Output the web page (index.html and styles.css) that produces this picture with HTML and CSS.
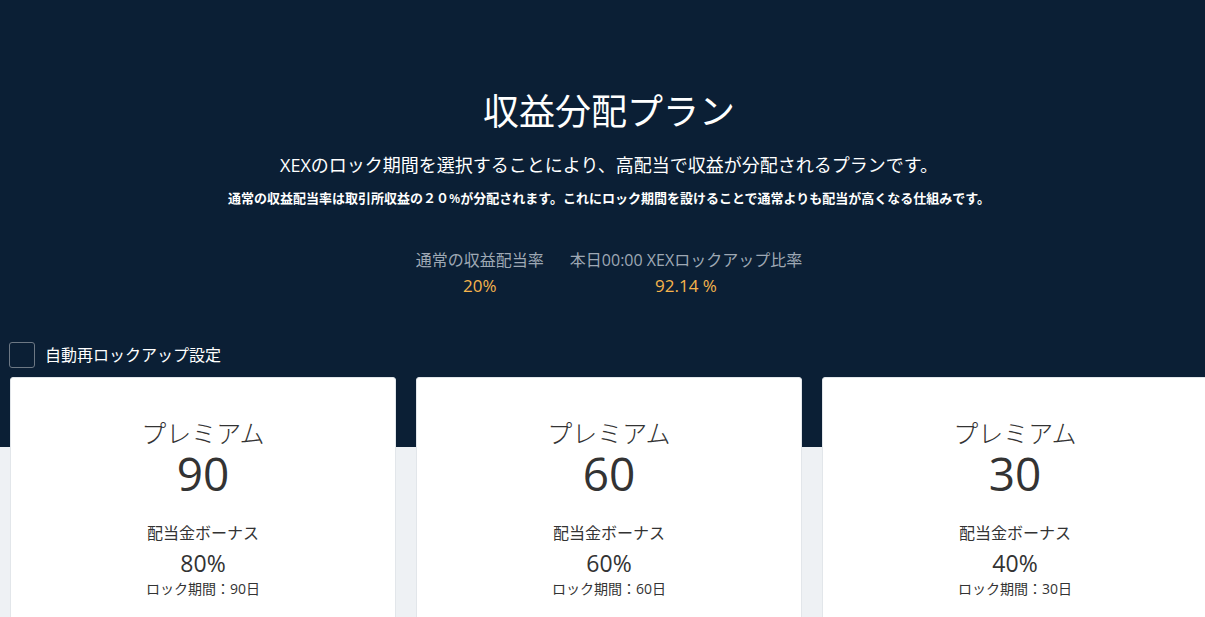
FILE: index.html
```html
<!DOCTYPE html>
<html lang="ja">
<head>
<meta charset="utf-8">
<title>収益分配プラン</title>
<link rel="stylesheet" href="styles.css">
</head>
<body>
<div class="page">
  <section class="hero">
    <h1 class="title">収益分配プラン</h1>
    <p class="lead">XEXのロック期間を選択することにより、高配当で収益が分配されるプランです。</p>
    <p class="note">通常の収益配当率は取引所収益の２０%が分配されます。これにロック期間を設けることで通常よりも配当が高くなる仕組みです。</p>
    <div class="stats">
      <div class="stat">
        <div class="stat-label">通常の収益配当率</div>
        <div class="stat-value">20%</div>
      </div>
      <div class="stat">
        <div class="stat-label">本日00:00 XEXロックアップ比率</div>
        <div class="stat-value">92.14 %</div>
      </div>
    </div>
    <label class="auto">
      <span class="box"></span>
      <span class="auto-text">自動再ロックアップ設定</span>
    </label>
  </section>
  <section class="plans">
    <div class="card">
      <div class="plan-name">プレミアム</div>
      <div class="plan-days">90</div>
      <div class="bonus-label">配当金ボーナス</div>
      <div class="bonus-value">80%</div>
      <div class="lock">ロック期間：90日</div>
    </div>
    <div class="card">
      <div class="plan-name">プレミアム</div>
      <div class="plan-days">60</div>
      <div class="bonus-label">配当金ボーナス</div>
      <div class="bonus-value">60%</div>
      <div class="lock">ロック期間：60日</div>
    </div>
    <div class="card">
      <div class="plan-name">プレミアム</div>
      <div class="plan-days">30</div>
      <div class="bonus-label">配当金ボーナス</div>
      <div class="bonus-value">40%</div>
      <div class="lock">ロック期間：30日</div>
    </div>
  </section>
</div>
</body>
</html>
```
FILE: styles.css
```css
html, body {
  margin: 0;
  padding: 0;
  overflow: hidden;
  background: #eef1f4;
}
body {
  font-family: "Open Sans", "Noto Sans CJK JP", sans-serif;
  color: #333;
}
.page {
  width: 1218px;
}
.hero {
  background: #0b1f35;
  color: #fff;
  padding: 90px 10px 9px;
  text-align: center;
}
.title {
  margin: 0;
  font-size: 36px;
  line-height: 44px;
  font-weight: 400;
}
.lead {
  margin: 18px 0 0;
  font-size: 18px;
  line-height: 26px;
}
.note {
  margin: 10px 0 0;
  font-size: 13px;
  line-height: 20px;
  font-weight: 600;
}
.stats {
  margin-top: 40px;
  display: flex;
  justify-content: center;
  gap: 26px;
}
.stat-label {
  font-size: 16px;
  line-height: 24px;
  color: #9ea8b4;
}
.stat-value {
  margin-top: 2px;
  font-size: 17px;
  line-height: 24px;
  color: #f6b44c;
}
.auto {
  margin-top: 44px;
  display: flex;
  align-items: center;
  gap: 10px;
  text-align: left;
  margin-left: -1px;
}
.box {
  width: 24px;
  height: 24px;
  border: 1px solid #6d7884;
  border-radius: 3px;
}
.auto-text {
  font-size: 16px;
  line-height: 26px;
}
.plans {
  display: flex;
  gap: 20px;
  padding: 0 10px;
  background: linear-gradient(#0b1f35 70px, #eef1f4 70px);
}
.card {
  width: 386px;
  flex: none;
  box-sizing: border-box;
  height: 300px;
  background: #fff;
  border: 1px solid #e2e6ea;
  border-radius: 3px;
  padding-top: 40px;
  text-align: center;
}
.plan-name {
  font-size: 25px;
  line-height: 30px;
  font-weight: 300;
}
.plan-days {
  font-size: 46px;
  line-height: 50px;
}
.bonus-label {
  margin-top: 23px;
  font-size: 16px;
  line-height: 24px;
}
.bonus-value {
  margin-top: 3px;
  font-size: 23px;
  line-height: 30px;
}
.lock {
  margin-top: 1px;
  font-size: 14px;
  line-height: 20px;
}
```
